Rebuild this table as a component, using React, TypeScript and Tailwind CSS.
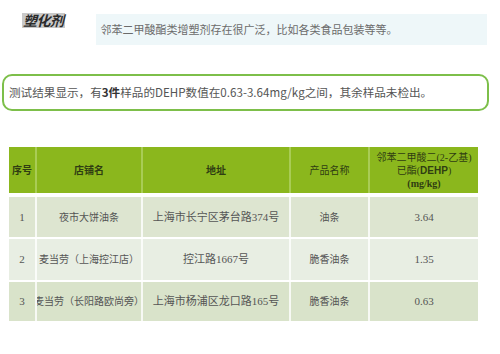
const cols = ["w-[28px]", "w-[106px]", "w-[148px]", "w-[79px]", "w-[108px]"];

const rows = [
  { no: "1", shop: "夜市大饼油条", addr: "上海市长宁区茅台路374号", name: "油条", val: "3.64", bg: "bg-[#dde5d0]" },
  { no: "2", shop: "麦当劳（上海控江店）", addr: "控江路1667号", name: "脆香油条", val: "1.35", bg: "bg-[#e8eee3]" },
  { no: "3", shop: "麦当劳（长阳路欧尚旁）", addr: "上海市杨浦区龙口路165号", name: "脆香油条", val: "0.63", bg: "bg-[#d9e3ca]" },
];

const serif = "font-['Liberation_Serif','Noto_Sans_CJK_SC',serif]";

export default function App() {
  return (
    <div className="w-[500px] h-[354px] bg-white flex flex-col font-['Noto_Sans_CJK_SC','Liberation_Sans',sans-serif] overflow-hidden">
      {/* top row */}
      <div className="flex flex-row items-start pt-[13px] pl-[22px]">
        <div className="h-[15px] px-[1px] bg-[#c9c9c9] text-[#2b2b2b] text-[14px] leading-[15px] font-bold italic tracking-[-0.5px]">
          塑化剂
        </div>
        <div className="ml-[31px] mt-[1px] w-[391px] h-[31px] bg-[#eef7f9] flex items-center pl-[5px] text-[11px] text-[#6b6b6b]">
          邻苯二甲酸酯类增塑剂存在很广泛，比如各类食品包装等等。
        </div>
      </div>

      {/* result box */}
      <div className="ml-[2px] mt-[29px] w-[487px] h-[37px] rounded-[10px] border-2 border-[#7dbf4a] flex items-center pl-[5px] text-[11.6px] text-[#555] whitespace-nowrap">
        测试结果显示，有<b className="text-[#333]">3件</b>样品的DEHP数值在0.63-3.64mg/kg之间，其余样品未检出。
      </div>

      {/* table */}
      <div className={`ml-[9px] mt-[36px] w-[469px] flex flex-col ${serif}`}>
        <div className="flex flex-row h-[46px] bg-[#8bb71d] text-[#2f3d12] text-[10px] font-bold">
          <div className={`${cols[0]} flex items-center justify-center border-r-2 border-[#a9cc55]`}>序号</div>
          <div className={`${cols[1]} flex items-center justify-center border-r-2 border-[#a9cc55]`}>店铺名</div>
          <div className={`${cols[2]} flex items-center justify-center border-r-2 border-[#a9cc55]`}>地址</div>
          <div className={`${cols[3]} flex items-center justify-center border-r-2 border-[#a9cc55] font-normal`}>产品名称</div>
          <div className={`${cols[4]} flex flex-col items-center justify-center text-[10px] leading-[13px] font-normal`}>
            <span>邻苯二甲酸二(2-乙基)</span>
            <span>
              已酯(<b className="font-['Liberation_Sans',sans-serif]">DEHP</b>)
            </span>
            <span className="font-bold">(mg/kg)</span>
          </div>
        </div>
        {rows.map((r, i) => (
          <div
            key={r.no}
            className={`flex flex-row ${i === 0 ? "mt-[4px] h-[40px]" : i === 1 ? "mt-[2px] h-[41px]" : "mt-[2px] h-[39px]"} ${r.bg} text-[11px] text-[#555]`}
          >
            <div className={`${cols[0]} flex items-center justify-center border-r-2 border-white/80`}>{r.no}</div>
            <div className={`${cols[1]} flex items-center justify-center border-r-2 border-white/80 overflow-hidden whitespace-nowrap text-[10px]`}>{r.shop}</div>
            <div className={`${cols[2]} flex items-center justify-center border-r-2 border-white/80 whitespace-nowrap`}>{r.addr}</div>
            <div className={`${cols[3]} flex items-center justify-center border-r-2 border-white/80 text-[10px]`}>{r.name}</div>
            <div className={`${cols[4]} flex items-center justify-center`}>{r.val}</div>
          </div>
        ))}
      </div>
    </div>
  );
}
